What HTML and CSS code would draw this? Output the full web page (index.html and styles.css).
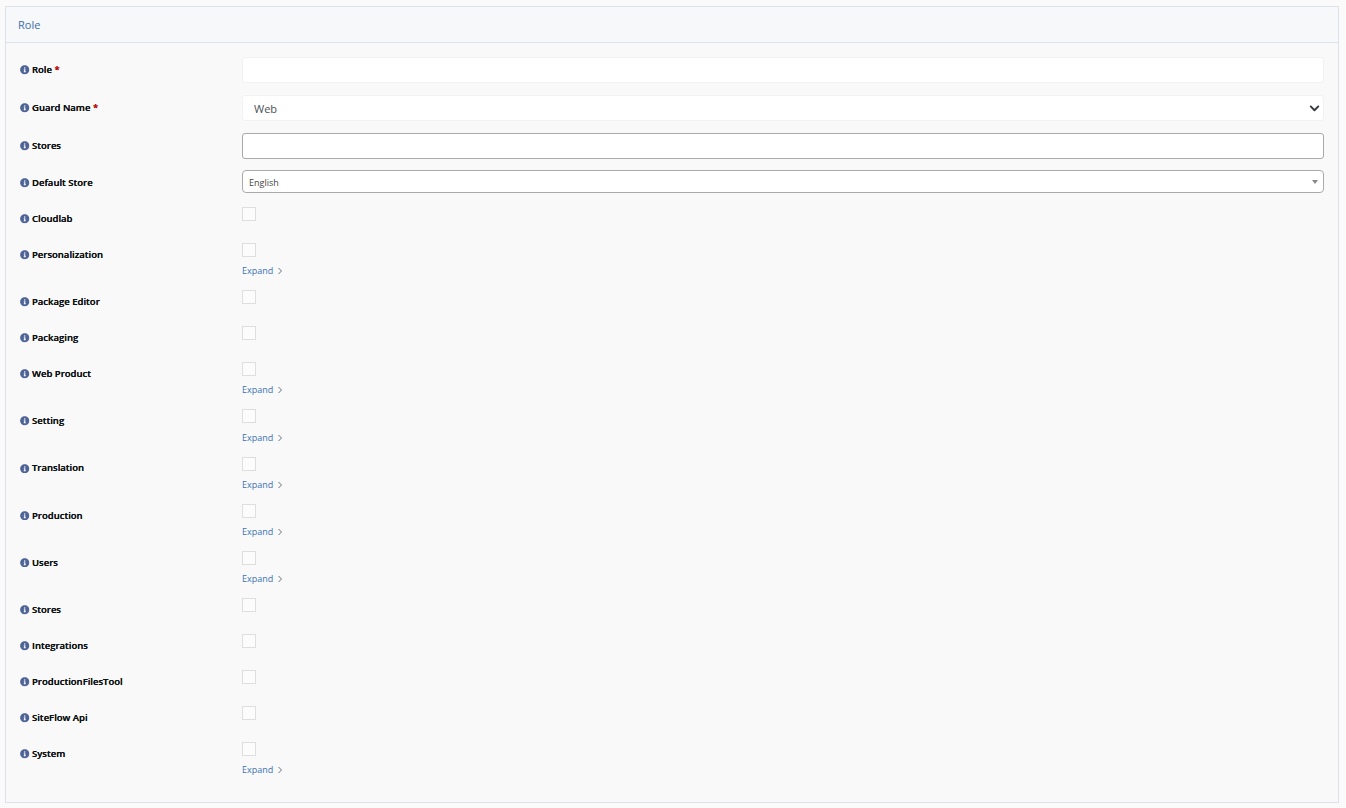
FILE: index.html
```html
<!DOCTYPE html>
<html lang="en">
<head>
<meta charset="utf-8">
<title>Role</title>
<link rel="stylesheet" href="styles.css">
</head>
<body>
<svg class="defs" width="0" height="0" aria-hidden="true">
  <symbol id="info" viewBox="0 0 512 512"><path d="M256 8C119 8 8 119 8 256s111 248 248 248 248-111 248-248S393 8 256 8zm0 110c23 0 42 19 42 42s-19 42-42 42-42-19-42-42 19-42 42-42zm56 254c0 7-5 12-12 12h-88c-7 0-12-5-12-12v-24c0-7 5-12 12-12h12v-64h-12c-7 0-12-5-12-12v-24c0-7 5-12 12-12h64c7 0 12 5 12 12v100h12c7 0 12 5 12 12v24z"/></symbol>
</svg>
<main class="card">
  <h1 class="card-header">Role</h1>
  <form class="card-body">
    <div class="row"><label class="label"><svg class="info"><use href="#info"/></svg>Role <span class="req">*</span></label><input class="field" type="text"></div>
    <div class="row"><label class="label"><svg class="info"><use href="#info"/></svg>Guard Name <span class="req">*</span></label>
      <div class="field select-field">Web<svg class="chev" viewBox="0 0 16 16"><path d="M2.5 5 8 10.5 13.5 5" fill="none" stroke="#343a40" stroke-width="2.8" stroke-linecap="round" stroke-linejoin="round"/></svg></div></div>
    <div class="row"><label class="label"><svg class="info"><use href="#info"/></svg>Stores</label><input class="field multi" type="text"></div>
    <div class="row row-default"><label class="label"><svg class="info"><use href="#info"/></svg>Default Store</label>
      <div class="select2"><span class="select2-text">English</span><span class="caret"></span></div></div>

    <div class="row check"><label class="label"><svg class="info"><use href="#info"/></svg>Cloudlab</label><div><span class="box"></span></div></div>
    <div class="row check"><label class="label"><svg class="info"><use href="#info"/></svg>Personalization</label><div><span class="box"></span><a class="expand">Expand<svg class="gt" viewBox="0 0 6 8"><path d="M1.5 1 4.5 4 1.5 7" fill="none" stroke="#6c757d" stroke-width="1"/></svg></a></div></div>
    <div class="row check"><label class="label"><svg class="info"><use href="#info"/></svg>Package Editor</label><div><span class="box"></span></div></div>
    <div class="row check"><label class="label"><svg class="info"><use href="#info"/></svg>Packaging</label><div><span class="box"></span></div></div>
    <div class="row check"><label class="label"><svg class="info"><use href="#info"/></svg>Web Product</label><div><span class="box"></span><a class="expand">Expand<svg class="gt" viewBox="0 0 6 8"><path d="M1.5 1 4.5 4 1.5 7" fill="none" stroke="#6c757d" stroke-width="1"/></svg></a></div></div>
    <div class="row check"><label class="label"><svg class="info"><use href="#info"/></svg>Setting</label><div><span class="box"></span><a class="expand">Expand<svg class="gt" viewBox="0 0 6 8"><path d="M1.5 1 4.5 4 1.5 7" fill="none" stroke="#6c757d" stroke-width="1"/></svg></a></div></div>
    <div class="row check"><label class="label"><svg class="info"><use href="#info"/></svg>Translation</label><div><span class="box"></span><a class="expand">Expand<svg class="gt" viewBox="0 0 6 8"><path d="M1.5 1 4.5 4 1.5 7" fill="none" stroke="#6c757d" stroke-width="1"/></svg></a></div></div>
    <div class="row check"><label class="label"><svg class="info"><use href="#info"/></svg>Production</label><div><span class="box"></span><a class="expand">Expand<svg class="gt" viewBox="0 0 6 8"><path d="M1.5 1 4.5 4 1.5 7" fill="none" stroke="#6c757d" stroke-width="1"/></svg></a></div></div>
    <div class="row check"><label class="label"><svg class="info"><use href="#info"/></svg>Users</label><div><span class="box"></span><a class="expand">Expand<svg class="gt" viewBox="0 0 6 8"><path d="M1.5 1 4.5 4 1.5 7" fill="none" stroke="#6c757d" stroke-width="1"/></svg></a></div></div>
    <div class="row check"><label class="label"><svg class="info"><use href="#info"/></svg>Stores</label><div><span class="box"></span></div></div>
    <div class="row check"><label class="label"><svg class="info"><use href="#info"/></svg>Integrations</label><div><span class="box"></span></div></div>
    <div class="row check"><label class="label"><svg class="info"><use href="#info"/></svg>ProductionFilesTool</label><div><span class="box"></span></div></div>
    <div class="row check"><label class="label"><svg class="info"><use href="#info"/></svg>SiteFlow Api</label><div><span class="box"></span></div></div>
    <div class="row check"><label class="label"><svg class="info"><use href="#info"/></svg>System</label><div><span class="box"></span><a class="expand">Expand<svg class="gt" viewBox="0 0 6 8"><path d="M1.5 1 4.5 4 1.5 7" fill="none" stroke="#6c757d" stroke-width="1"/></svg></a></div></div>
  </form>
</main>
</body>
</html>
```
FILE: styles.css
```css
* { box-sizing: border-box; }
html, body { height: 100%; }
body {
  margin: 0;
  padding: 6px 7px 5px 5px;
  background: #fafafa;
  font-family: "Open Sans", "Noto Sans", sans-serif;
  color: #212529;
  overflow: hidden;
}
.defs { position: absolute; }
.card {
  height: 797px;
  background: #f9f9f9;
  border: 1px solid #dee2e8;
}
.card-header {
  margin: 0;
  height: 36px;
  padding: 0 12px;
  line-height: 35px;
  font-size: 11px;
  font-weight: 400;
  color: #3a6ea8;
  background: #f7f8fa;
  border-bottom: 1px solid #dee2e8;
}
.card-body { padding: 14px 14px 0 14px; }
.row {
  display: grid;
  grid-template-columns: 222px 1082px;
  margin-bottom: 12px;
}
.row-default { margin-top: -1px; margin-bottom: 14px; }
.check { min-height: 23px; margin-bottom: 13px; }
.label {
  display: flex;
  align-items: center;
  height: 12px;
  margin-top: 7px;
  font-size: 9.5px;
  font-weight: 600;
  line-height: 12px;
  color: #0f1214;
  text-shadow: 0 0 .4px #0f1214;
  white-space: pre;
}
.check .label { margin-top: 5.8px; }
.info { width: 9.5px; height: 9.5px; margin: 0 2.5px 0 0; fill: #4f6496; flex: none; }
.req { color: #e60000; }
.field {
  display: block;
  width: 100%;
  height: 26px;
  padding: 0 12px;
  margin: 0;
  background: #fff;
  border: 1px solid #f1f2f4;
  border-radius: 3px;
  outline: none;
  font-family: inherit;
  font-size: 11px;
  color: #495057;
}
.select-field { display: flex; align-items: center; justify-content: space-between; padding: 0 3px 0 11px; }
.chev { width: 11px; height: 11px; }
.multi { border: 1px solid #a9a9a9; }
.select2 {
  display: flex;
  align-items: center;
  justify-content: space-between;
  height: 23px;
  padding: 0 5px 0 6px;
  background: #fff;
  border: 1px solid #aaa;
  border-radius: 4px;
  font-size: 9px;
  color: #444;
}
.select2-text { padding-top: 2px; }
.caret {
  width: 0; height: 0;
  border-left: 3px solid transparent;
  border-right: 3px solid transparent;
  border-top: 4px solid #888;
}
.box {
  display: block;
  width: 14px;
  height: 14px;
  background: #fcfcfc;
  border: 1px solid #dedede;
}
.expand {
  display: flex;
  align-items: center;
  box-sizing: content-box;
  height: 12px;
  padding-top: 8.2px;
  font-size: 9px;
  line-height: 12px;
  color: #3a72b4;
}
.gt { width: 6px; height: 8px; margin-left: 4px; }
```
